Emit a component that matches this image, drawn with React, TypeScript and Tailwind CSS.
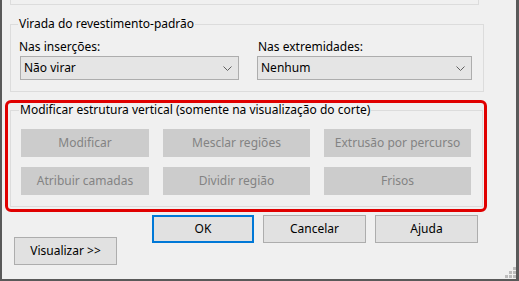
import React from 'react';

function Chevron() {
    return (
        <svg width="9" height="5" viewBox="0 0 9 5" className="shrink-0">
            <path d="M0.5 0.5 L4.5 4.5 L8.5 0.5" fill="none" stroke="#606060" strokeWidth="1" />
        </svg>
    );
}

function Dropdown({ value, width }: { value: string; width: string }) {
    return (
        <div className={`${width} h-[24px] flex items-center justify-between pl-[3px] pr-[6px] bg-[#e5e5e5] border border-[#adadad]`}>
            <span className="leading-[16px]">{value}</span>
            <Chevron />
        </div>
    );
}

function Btn({ label, disabled, width, focused }: { label: string; disabled?: boolean; width: string; focused?: boolean }) {
    if (disabled) {
        return (
            <div className={`${width} h-[28px] flex items-center justify-center bg-[#cccccc] text-[#838383] border border-[#cccccc]`}>
                {label}
            </div>
        );
    }
    return (
        <div
            className={`${width} h-[28px] flex items-center justify-center bg-[#e1e1e1] text-black ${
                focused ? 'border-2 border-[#0078d7]' : 'border border-[#adadad]'
            }`}
        >
            {label}
        </div>
    );
}

function Grip() {
    const dots = [
        [8, 0],
        [4, 4],
        [8, 4],
        [0, 8],
        [4, 8],
        [8, 8],
    ];
    return (
        <svg width="11" height="11" viewBox="0 0 11 11" className="absolute right-0 bottom-[1px]">
            {dots.map(([x, y], i) => (
                <rect key={i} x={x} y={y} width="3" height="3" fill="#bcbcbc" />
            ))}
        </svg>
    );
}

export default function App() {
    return (
        <div className="relative w-[519px] h-[281px] overflow-hidden bg-[#f0f0f0] border-l-2 border-r-[3px] border-b-2 border-[#595959] font-['Noto_Sans',sans-serif] text-[12px] text-black">
            {/* Tail of the groupbox above */}
            <div className="ml-[8px] w-[469px] h-[5px] border-x border-b border-[#dcdcdc]" />

            {/* Virada do revestimento-padrão */}
            <fieldset className="mt-[11px] ml-[8px] w-[474px] border border-[#dcdcdc] px-[9px] pt-[7px] pb-[11px]">
                <legend className="ml-[-2px] px-[1px] leading-[16px]">Virada do revestimento-padrão</legend>
                <div className="flex gap-[18px]">
                    <div className="flex flex-col gap-[1px]">
                        <span className="ml-[-1px] leading-[16px]">Nas inserções:</span>
                        <Dropdown value="Não virar" width="w-[219px]" />
                    </div>
                    <div className="flex flex-col gap-[1px]">
                        <span className="ml-[1px] leading-[16px]">Nas extremidades:</span>
                        <Dropdown value="Nenhum" width="w-[215px]" />
                    </div>
                </div>
            </fieldset>

            {/* Modificar estrutura vertical, highlighted */}
            <div className="mt-[8px] ml-[3px] w-[482px] border-[3px] border-[#e00000] rounded-[6px] pl-[2px] pr-[1px] pb-[2px]">
                <fieldset className="w-[473px] border border-[#dcdcdc] pl-[10px] pt-[12px] pb-[11px]">
                    <legend className="ml-[-2px] px-[1px] leading-[14px]">
                        Modificar estrutura vertical (somente na visualização do corte)
                    </legend>
                    <div className="grid grid-cols-[128px_147px_147px] gap-x-[14px] gap-y-[10px]">
                        <Btn label="Modificar" disabled width="w-[128px]" />
                        <Btn label="Mesclar regiões" disabled width="w-[147px]" />
                        <Btn label="Extrusão por percurso" disabled width="w-[147px]" />
                        <Btn label="Atribuir camadas" disabled width="w-[128px]" />
                        <Btn label="Dividir região" disabled width="w-[147px]" />
                        <Btn label="Frisos" disabled width="w-[147px]" />
                    </div>
                </fieldset>
            </div>

            {/* Dialog buttons */}
            <div className="mt-[3px] flex items-start">
                <div className="ml-[12px] mt-[22px]">
                    <Btn label="Visualizar >>" width="w-[103px]" />
                </div>
                <div className="ml-[35px] flex gap-[9px]">
                    <Btn label="OK" focused width="w-[102px]" />
                    <Btn label="Cancelar" width="w-[103px]" />
                    <Btn label="Ajuda" width="w-[103px]" />
                </div>
            </div>

            <Grip />
        </div>
    );
}
